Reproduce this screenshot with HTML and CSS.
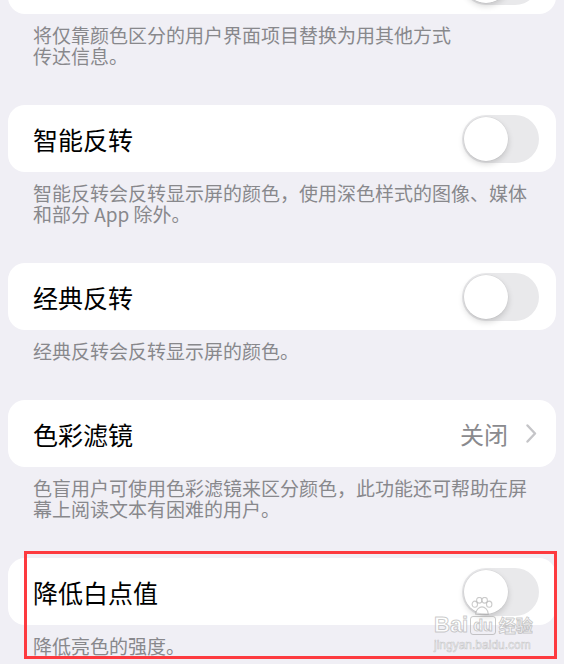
FILE: index.html
```html
<!DOCTYPE html>
<html lang="zh-CN">
<head>
    <meta charset="UTF-8">
    <meta name="viewport" content="width=device-width, initial-scale=1.0">
    <title>显示与文字大小</title>
    <link rel="stylesheet" href="styles.css">
</head>
<body>
    <div class="settings">
        <!-- 上一组只露出底边 -->
        <div class="group group-top">
            <div class="cell">
                <span class="cell-title"></span>
                <span class="switch"><span class="knob"></span></span>
            </div>
            <p class="group-footer footer-short">将仅靠颜色区分的用户界面项目替换为用其他方式传达信息。</p>
        </div>

        <div class="group">
            <div class="cell">
                <span class="cell-title">智能反转</span>
                <span class="switch"><span class="knob"></span></span>
            </div>
            <p class="group-footer">智能反转会反转显示屏的颜色，使用深色样式的图像、媒体和部分 App 除外。</p>
        </div>

        <div class="group">
            <div class="cell">
                <span class="cell-title">经典反转</span>
                <span class="switch"><span class="knob"></span></span>
            </div>
            <p class="group-footer">经典反转会反转显示屏的颜色。</p>
        </div>

        <div class="group">
            <div class="cell">
                <span class="cell-title">色彩滤镜</span>
                <span class="cell-detail">关闭</span>
                <svg class="chevron" width="11" height="19" viewBox="0 0 11 19">
                    <path d="M1.5 1.5 L9 9.5 L1.5 17.5" fill="none" stroke="#c5c5c8" stroke-width="2.4" stroke-linecap="round" stroke-linejoin="round"/>
                </svg>
            </div>
            <p class="group-footer">色盲用户可使用色彩滤镜来区分颜色，此功能还可帮助在屏幕上阅读文本有困难的用户。</p>
        </div>

        <div class="group group-marked">
            <div class="cell">
                <span class="cell-title">降低白点值</span>
                <span class="switch"><span class="knob"></span></span>
            </div>
            <p class="group-footer">降低亮色的强度。</p>

            <!-- 标注框 -->
            <div class="mark-box"></div>

            <!-- 水印 -->
            <div class="watermark">
                <div class="wm-logo">
                    <span>Bai</span>
                    <span class="wm-du">
                        <svg class="wm-paw" width="24" height="18" viewBox="0 0 26 20">
                            <g fill="rgba(255,255,255,0.7)" stroke="rgba(140,140,140,0.45)" stroke-width="1.2">
                                <ellipse cx="5" cy="8" rx="3" ry="3.4"/>
                                <ellipse cx="10" cy="3.6" rx="3" ry="3.2"/>
                                <ellipse cx="16" cy="3.6" rx="3" ry="3.2"/>
                                <ellipse cx="21" cy="8" rx="3" ry="3.4"/>
                                <path d="M6 19 C6 14 10 11 13 11 C16 11 20 14 20 19 Z"/>
                            </g>
                        </svg>
                        <span class="wm-du-box">du</span>
                    </span>
                    <span class="wm-cn">经验</span>
                </div>
                <div class="wm-url">jingyan.baidu.com</div>
            </div>
        </div>
    </div>
</body>
</html>
```

FILE: styles.css
```css
body {
    margin: 0;
    background-color: #f0eff5;
    font-family: "Noto Sans CJK SC", "Noto Sans", sans-serif;
    color: #000;
    overflow: hidden;
}
.settings {
    padding: 0 8px;
}
.group {
    margin-bottom: 39px;
}
.group-top {
    margin-top: -53px;
}
.cell {
    height: 67px;
    display: flex;
    align-items: center;
    padding: 0 17px 0 25px;
    background: #fff;
    border-radius: 17px;
}
.cell-title {
    flex: 1;
    font-size: 25px;
    line-height: 30px;
}
.cell-detail {
    font-size: 24px;
    line-height: 30px;
    color: #8a8a8e;
    margin-right: 18px;
}
.chevron {
    margin-right: 2px;
}
.switch {
    width: 77px;
    height: 48px;
    border-radius: 24px;
    background: #e9e9eb;
    display: flex;
    align-items: center;
    padding: 0 2px;
    box-sizing: border-box;
}
.knob {
    width: 44px;
    height: 44px;
    border-radius: 50%;
    background: #fff;
    box-shadow: 0 3px 6px rgba(0, 0, 0, 0.16), 0 0 0 0.5px rgba(0, 0, 0, 0.06);
}
.group-footer {
    margin: 0;
    padding: 10px 25px 0;
    font-size: 19px;
    line-height: 21px;
    color: #88888c;
}
.footer-short {
    max-width: 428px;
}

/* 标注 */
.group-marked {
    position: relative;
}
.mark-box {
    position: absolute;
    top: -7px;
    left: 16px;
    right: -1px;
    bottom: -3px;
    border: 3px solid #fd3a3f;
}
.watermark {
    position: absolute;
    left: 426px;
    top: 56px;
    color: rgba(255, 255, 255, 0.75);
    font-family: "Liberation Sans", Arial, sans-serif;
    -webkit-text-stroke: 1px rgba(140, 140, 140, 0.45);
}
.wm-logo {
    display: flex;
    align-items: flex-end;
    font-size: 22px;
    font-weight: bold;
    line-height: 20px;
}
.wm-du {
    position: relative;
    margin-left: 2px;
}
.wm-paw {
    position: absolute;
    left: 0;
    top: -17px;
}
.wm-du-box {
    display: inline-block;
    font-size: 16px;
    line-height: 15px;
    padding: 1px 2px;
    border: 1.5px solid rgba(140, 140, 140, 0.45);
    border-radius: 3px;
}
.wm-cn {
    font-family: "Noto Sans CJK SC", sans-serif;
    font-size: 17px;
    line-height: 20px;
    margin-left: 3px;
}
.wm-url {
    font-size: 12px;
    line-height: 14px;
    margin-top: 3px;
    -webkit-text-stroke: 0.6px rgba(140, 140, 140, 0.45);
}
```
